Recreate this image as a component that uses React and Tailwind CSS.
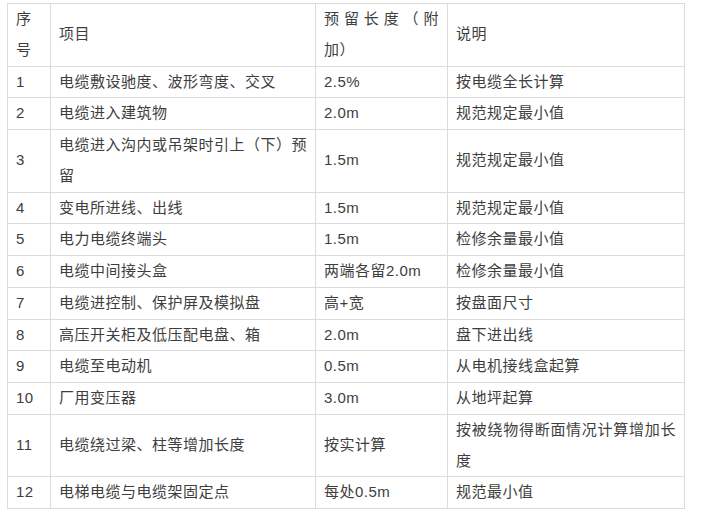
const rows = [
  ["1", "电缆敷设驰度、波形弯度、交叉", "2.5%", "按电缆全长计算"],
  ["2", "电缆进入建筑物", "2.0m", "规范规定最小值"],
  ["3", "电缆进入沟内或吊架时引上（下）预留", "1.5m", "规范规定最小值"],
  ["4", "变电所进线、出线", "1.5m", "规范规定最小值"],
  ["5", "电力电缆终端头", "1.5m", "检修余量最小值"],
  ["6", "电缆中间接头盒", "两端各留2.0m", "检修余量最小值"],
  ["7", "电缆进控制、保护屏及模拟盘", "高+宽", "按盘面尺寸"],
  ["8", "高压开关柜及低压配电盘、箱", "2.0m", "盘下进出线"],
  ["9", "电缆至电动机", "0.5m", "从电机接线盒起算"],
  ["10", "厂用变压器", "3.0m", "从地坪起算"],
  ["11", "电缆绕过梁、柱等增加长度", "按实计算", "按被绕物得断面情况计算增加长度"],
  ["12", "电梯电缆与电缆架固定点", "每处0.5m", "规范最小值"],
];

const cell =
  "border border-[#dcdcdc] px-2 py-0 align-middle text-justify leading-[30.75px]";

export default function App() {
  return (
    <div
      className="w-[706px] h-[526px] bg-white pt-[3px] pl-[7px] text-[15px] tracking-[0.5px] text-[#3e3e3e]"
      style={{ fontFamily: '"Liberation Sans", "Noto Sans CJK SC", sans-serif' }}
    >
      <table className="table-fixed border-collapse w-[677px]">
        <colgroup>
          <col className="w-[43px]" />
          <col className="w-[265px]" />
          <col className="w-[132px]" />
          <col className="w-[237px]" />
        </colgroup>
        <thead>
          <tr>
            <th className={cell + " font-normal"}>序号</th>
            <th className={cell + " font-normal"}>项目</th>
            <th className={cell + " font-normal"}>预留长度（附加）</th>
            <th className={cell + " font-normal"}>说明</th>
          </tr>
        </thead>
        <tbody>
          {rows.map((r) => (
            <tr key={r[0]}>
              {r.map((v, i) => (
                <td key={i} className={cell}>
                  {v}
                </td>
              ))}
            </tr>
          ))}
        </tbody>
      </table>
    </div>
  );
}
